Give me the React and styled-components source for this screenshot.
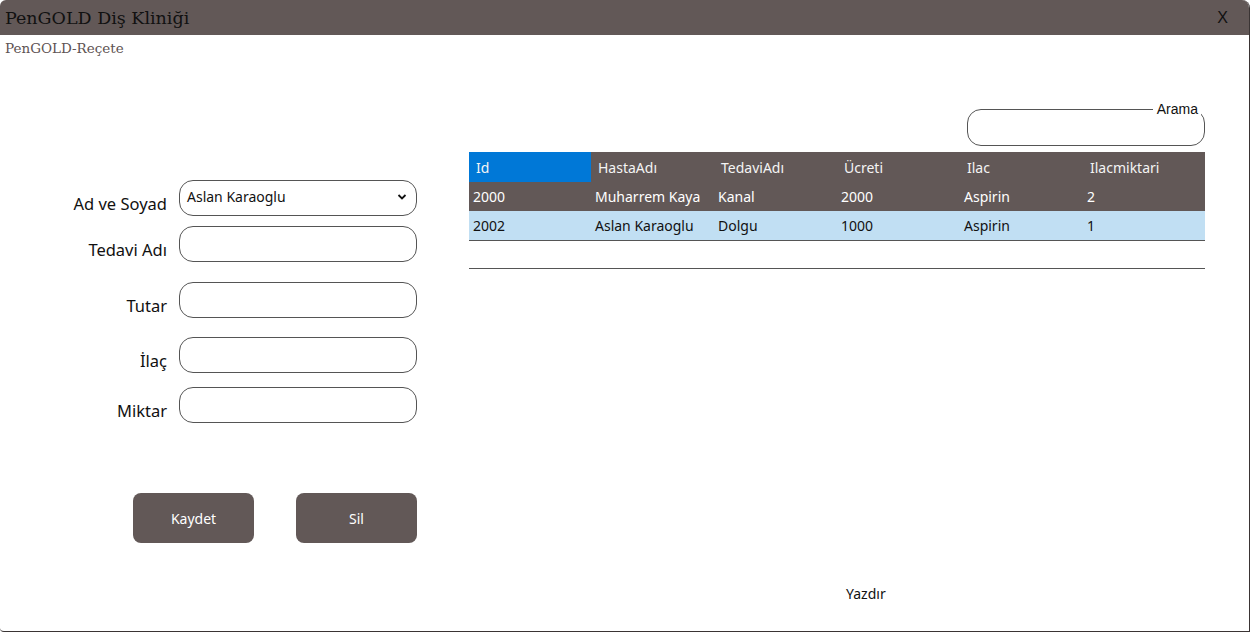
import React from 'react'
import styled, { createGlobalStyle } from 'styled-components'

const GlobalStyle = createGlobalStyle`
  html, body {
    margin: 0;
    padding: 0;
    background: #fff;
  }
  body {
    font-family: "Noto Sans", "Open Sans", sans-serif;
  }
`

const Window = styled.div`
  width: 1249px;
  height: 631px;
  border-right: 1px solid #3a3434;
  border-bottom: 1px solid #3a3434;
  border-radius: 0 8px 0 4px;
  overflow: hidden;
  display: flex;
  flex-direction: column;
  background: #fff;
`

const TitleBar = styled.div`
  height: 35px;
  background: #625857;
  display: flex;
  align-items: center;
  justify-content: space-between;
  padding: 0 21px 0 5px;
  border-top-left-radius: 6px;
`

const Title = styled.div`
  font-family: "DejaVu Serif", serif;
  font-size: 17.5px;
  color: #111;
  padding-top: 1px;
`

const Close = styled.div`
  font-family: "Liberation Sans", sans-serif;
  font-size: 16px;
  color: #111;
`

const SubTitle = styled.div`
  font-family: "DejaVu Serif", serif;
  font-size: 13.5px;
  color: #5e5353;
  padding: 5px 0 0 5px;
  height: 26px;
  box-sizing: border-box;
`

const Body = styled.div`
  flex: 1;
  display: flex;
`

const Left = styled.div`
  width: 417px;
  display: flex;
  flex-direction: column;
  padding-top: 119px;
`

const Row = styled.div`
  display: flex;
  align-items: flex-start;
  height: ${p => p.h}px;
`

const Label = styled.div`
  width: 167px;
  text-align: right;
  font-size: 16.5px;
  color: #111;
  padding: 14px 12px 0 0;
  line-height: 20px;
`

const Field = styled.input`
  width: 238px;
  height: 36px;
  box-sizing: border-box;
  border: 1px solid #555;
  border-radius: 14px;
  background: #fff;
  outline: none;
  font-family: inherit;
  font-size: 14px;
  padding: 0 8px;
`

const SelectWrap = styled.div`
  width: 238px;
  height: 36px;
  box-sizing: border-box;
  border: 1px solid #555;
  border-radius: 14px;
  display: flex;
  align-items: center;
  justify-content: space-between;
  padding: 0 9px 3px 7px;
  font-size: 14px;
  color: #111;
`

const Chevron = () => (
  <svg width="10" height="8" viewBox="0 0 10 8">
    <path d="M1.5 2 L5 5.5 L8.5 2" stroke="#111" strokeWidth="1.8" fill="none" />
  </svg>
)

const Buttons = styled.div`
  display: flex;
  gap: 42px;
  padding-left: 133px;
  margin-top: 56px;
`

const Button = styled.button`
  width: 121px;
  height: 50px;
  border: none;
  border-radius: 8px;
  background: #625857;
  color: #fff;
  font-family: inherit;
  font-size: 14px;
`

const Right = styled.div`
  margin-left: 52px;
  width: 736px;
  display: flex;
  flex-direction: column;
  padding-top: 40px;
`

const SearchBox = styled.fieldset`
  margin: 0 0 6px auto;
  width: 238px;
  height: 45px;
  box-sizing: border-box;
  border: 1px solid #555;
  border-radius: 14px;
  padding: 0;
`

const Legend = styled.legend`
  margin-left: auto;
  margin-right: 3px;
  padding: 0 3px 0 4px;
  font-family: "Liberation Sans", sans-serif;
  font-size: 14px;
  color: #111;
  line-height: 16px;
`

const Table = styled.div`
  display: flex;
  flex-direction: column;
  border-bottom: 1px solid #555;
`

const TRow = styled.div`
  display: grid;
  grid-template-columns: 122px 123px 123px 123px 123px 122px;
  height: ${p => p.h}px;
  background: ${p => p.bg};
  color: ${p => p.fg};
`

const Cell = styled.div`
  display: flex;
  align-items: center;
  padding-left: ${p => (p.head ? 7 : 4)}px;
  font-size: 14px;
  background: ${p => p.bg || 'transparent'};
`

const Rule = styled.div`
  height: 1px;
  background: #555;
  margin-top: 27px;
`

const Print = styled.div`
  margin: 315px 0 0 377px;
  font-size: 14px;
  color: #111;
`

const headers = ['Id', 'HastaAdı', 'TedaviAdı', 'Ücreti', 'Ilac', 'Ilacmiktari']
const rows = [
  { cells: ['2000', 'Muharrem Kaya', 'Kanal', '2000', 'Aspirin', '2'], bg: '#625857', fg: '#fff' },
  { cells: ['2002', 'Aslan Karaoglu', 'Dolgu', '1000', 'Aspirin', '1'], bg: '#c1dff3', fg: '#111' },
]

const fields = [
  { label: 'Tedavi Adı', h: 56 },
  { label: 'Tutar', h: 55 },
  { label: 'İlaç', h: 50 },
  { label: 'Miktar', h: 50 },
]

export default function App() {
  return (
    <>
      <GlobalStyle />
      <Window>
        <TitleBar>
          <Title>PenGOLD Diş Kliniği</Title>
          <Close>X</Close>
        </TitleBar>
        <SubTitle>PenGOLD-Reçete</SubTitle>
        <Body>
          <Left>
            <Row h={46}>
              <Label>Ad ve Soyad</Label>
              <SelectWrap>
                <span>Aslan Karaoglu</span>
                <Chevron />
              </SelectWrap>
            </Row>
            {fields.map(f => (
              <Row key={f.label} h={f.h}>
                <Label>{f.label}</Label>
                <Field />
              </Row>
            ))}
            <Buttons>
              <Button>Kaydet</Button>
              <Button>Sil</Button>
            </Buttons>
          </Left>
          <Right>
            <SearchBox>
              <Legend>Arama</Legend>
            </SearchBox>
            <Table>
              <TRow h={30} bg="#625857" fg="#f4f4f4">
                {headers.map((h, i) => (
                  <Cell key={h} head bg={i === 0 ? '#0078d7' : undefined}>{h}</Cell>
                ))}
              </TRow>
              {rows.map(r => (
                <TRow key={r.cells[0]} h={29} bg={r.bg} fg={r.fg}>
                  {r.cells.map((c, i) => <Cell key={i}>{c}</Cell>)}
                </TRow>
              ))}
            </Table>
            <Rule />
            <Print>Yazdır</Print>
          </Right>
        </Body>
      </Window>
    </>
  )
}
